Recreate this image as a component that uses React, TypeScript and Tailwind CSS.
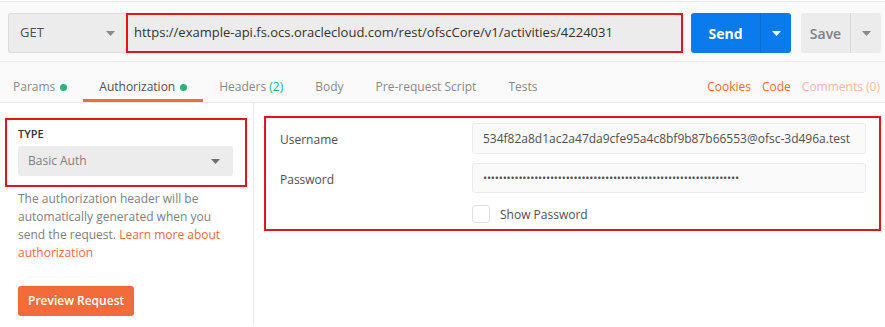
import React from 'react';

const Caret = ({ className = '' }: { className?: string }) => (
  <svg width="9" height="5" viewBox="0 0 9 5" className={className}>
    <path d="M0 0h9L4.5 5z" fill="currentColor" />
  </svg>
);

const Dot = () => <span className="ml-[5px] inline-block h-[7px] w-[7px] rounded-full bg-[#26b47f]" />;

export default function App() {
  const font = { fontFamily: '"Open Sans", "Noto Sans", Arial, sans-serif' };
  return (
    <div className="h-[327px] w-[885px] overflow-hidden bg-white text-[12px] text-[#505050]" style={font}>
      {/* Request bar */}
      <div className="mt-px flex h-[61px] items-start border-y border-[#e8e8e8] bg-[#fafafa] pl-2 pt-[11px]">
        <div className="flex h-10 w-[118px] items-center justify-between rounded-l-[3px] border border-r-0 border-[#dcdcdc] bg-[#ececec] pl-[11px] pr-[11px]">
          <span className="text-[13px] text-[#505050]">GET</span>
          <Caret className="text-[#8a8a8a]" />
        </div>
        <div className="flex h-10 w-[557px] items-center border-2 border-[#e3141e] bg-[#ececec] pl-[6px]">
          <span className="text-[13px] text-[#333]">https://example-api.fs.ocs.oraclecloud.com/rest/ofscCore/v1/activities/4224031</span>
        </div>
        <div className="ml-2 flex h-10 w-[100px] overflow-hidden rounded-[3px] bg-[#097bed] text-white">
          <div className="flex w-[69px] items-center justify-center text-[14px] font-bold">Send</div>
          <div className="flex flex-1 items-center justify-center border-l border-[#0b6ed3]">
            <Caret />
          </div>
        </div>
        <div className="ml-[10px] flex h-10 w-[80px] overflow-hidden rounded-[3px] bg-[#ececec] text-[#808080]">
          <div className="flex w-[49px] items-center justify-center text-[14px] font-semibold">Save</div>
          <div className="flex flex-1 items-center justify-center border-l border-[#d8d8d8]">
            <Caret className="text-[#8a8a8a]" />
          </div>
        </div>
      </div>

      {/* Tabs */}
      <div className="flex h-[41px] items-stretch border-b border-[#e8e8e8] bg-[#fafafa]">
        <div className="flex items-center pl-[13px] pr-4 pt-[10px] text-[#8a8a8a]">
          Params<Dot />
        </div>
        <div className="flex items-center border-b-[3px] border-[#f26b3a] px-4 pt-[13px] text-[#505050]">
          Authorization<Dot />
        </div>
        <div className="flex items-center px-4 pt-[10px] text-[#8a8a8a]">
          Headers&nbsp;<span className="text-[#26b47f]">(2)</span>
        </div>
        <div className="flex items-center px-4 pt-[10px] text-[#8a8a8a]">Body</div>
        <div className="flex items-center px-4 pt-[10px] text-[#8a8a8a]">Pre-request Script</div>
        <div className="flex items-center px-4 pt-[10px] text-[#8a8a8a]">Tests</div>
        <div className="ml-auto flex items-center gap-[11px] pr-[5px] pt-[10px]">
          <span className="text-[#f26b3a]">Cookies</span>
          <span className="text-[#f26b3a]">Code</span>
          <span className="text-[#f8b89d]">Comments (0)</span>
        </div>
      </div>

      <div className="flex h-[223px]">
        {/* Left: auth type */}
        <div className="w-[254px] shrink-0 border-r border-[#e8e8e8] pl-[5px] pt-[15px]">
          <div className="w-[242px] border-2 border-[#e3141e] pb-[9px] pl-[11px] pt-[4px]">
            <div className="text-[11px] font-semibold leading-[20px] text-[#333]">TYPE</div>
            <div className="mt-[2px] flex h-[30px] w-[215px] items-center justify-between rounded-[3px] bg-[#ececec] pl-[10px] pr-[13px]">
              <span className="text-[#808080]">Basic Auth</span>
              <Caret className="text-[#707070]" />
            </div>
          </div>
          <p className="mt-[3px] w-[228px] pl-[13px] leading-[18px] text-[#808080]">
            The authorization header will be automatically generated when you send the request.{' '}
            <span className="text-[#f26b3a]">Learn more about authorization</span>
          </p>
          <button className="ml-[13px] mt-[24px] h-[30px] rounded-[3px] bg-[#f26b3a] px-[10px] text-[12px] font-semibold text-white">
            Preview Request
          </button>
        </div>

        {/* Right: credentials */}
        <div className="flex-1 pl-[10px] pt-[13px]">
          <div className="w-[617px] border-2 border-[#e3141e] pb-[5px] pl-[14px] pr-[13px] pt-[5px]">
            <div className="flex items-center">
              <div className="w-[192px] pt-[3px]">Username</div>
              <div className="flex h-[31px] flex-1 items-center rounded-[3px] border border-[#ececec] bg-[#fafafa] pl-[10px]">
                534f82a8d1ac2a47da9cfe95a4c8bf9b87b66553@ofsc-3d496a.test
              </div>
            </div>
            <div className="mt-[9px] flex items-center">
              <div className="w-[192px] pt-[3px]">Password</div>
              <div className="flex h-[30px] flex-1 items-center overflow-hidden rounded-[3px] border border-[#ececec] bg-[#fafafa] pl-[10px] text-[11px] tracking-[-0.2px] text-[#505050]">
                {'•'.repeat(65)}
              </div>
            </div>
            <div className="mt-[11px] flex items-center pl-[192px]">
              <span className="h-[18px] w-[18px] rounded-[3px] border border-[#e0e0e0] bg-white" />
              <span className="ml-[10px] pt-[2px] text-[12px] leading-[18px]">Show Password</span>
            </div>
          </div>
        </div>
      </div>
    </div>
  );
}
